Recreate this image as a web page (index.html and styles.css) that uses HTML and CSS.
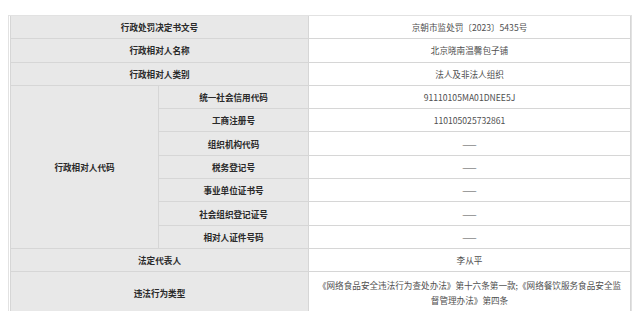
FILE: index.html
```html
<!DOCTYPE html>
<html lang="zh-CN">
<head>
<meta charset="utf-8">
<link rel="stylesheet" href="styles.css">
</head>
<body>
<div class="wrap">
<table class="info">
  <colgroup><col class="k1"><col class="k2"><col></colgroup>
  <tr><td class="lab" colspan="2">行政处罚决定书文号</td><td class="val">京朝市监处罚〔2023〕5435号</td></tr>
  <tr><td class="lab" colspan="2">行政相对人名称</td><td class="val">北京晓南温馨包子铺</td></tr>
  <tr><td class="lab" colspan="2">行政相对人类别</td><td class="val">法人及非法人组织</td></tr>
  <tr><td class="lab" rowspan="7">行政相对人代码</td><td class="lab">统一社会信用代码</td><td class="val">91110105MA01DNEE5J</td></tr>
  <tr><td class="lab">工商注册号</td><td class="val">110105025732861</td></tr>
  <tr><td class="lab">组织机构代码</td><td class="val">——</td></tr>
  <tr><td class="lab">税务登记号</td><td class="val">——</td></tr>
  <tr><td class="lab">事业单位证书号</td><td class="val">——</td></tr>
  <tr><td class="lab">社会组织登记证号</td><td class="val">——</td></tr>
  <tr><td class="lab">相对人证件号码</td><td class="val">——</td></tr>
  <tr><td class="lab" colspan="2">法定代表人</td><td class="val">李从平</td></tr>
  <tr class="tall"><td class="lab" colspan="2">违法行为类型</td><td class="val multi">《网络食品安全违法行为查处办法》第十六条第一款;《网络餐饮服务食品安全监督管理办法》第四条</td></tr>
</table>
</div>
</body>
</html>
```

FILE: styles.css
```css
html, body {
  margin: 0;
  padding: 0;
  background: #ffffff;
}
body {
  padding: 15px 8px 0 8px;
  font-family: "Noto Sans CJK SC", "Noto Sans", sans-serif;
  font-size: 8.6px;
}
.wrap {
  border: 1px solid #e2e2e2;
  padding: 0 0 0 1px;
}
.info {
  width: 100%;
  border-collapse: collapse;
  table-layout: fixed;
}
.k1 {
  width: 148px;
}
.k2 {
  width: 150px;
}
.info td {
  border: 1px solid #d6d6d6;
  height: 22.3px;
  padding: 0 4px;
  text-align: center;
  vertical-align: middle;
  line-height: 12px;
}
.info tr:first-of-type td {
  border-top: none;
}
.lab {
  background: #e8e8e8;
  color: #2a2a2a;
  font-weight: 600;
}
.val {
  background: #ffffff;
  color: #505050;
}
.tall td {
  height: 37px;
}
.info .multi {
  line-height: 15px;
  padding: 2px 7px;
}
```
